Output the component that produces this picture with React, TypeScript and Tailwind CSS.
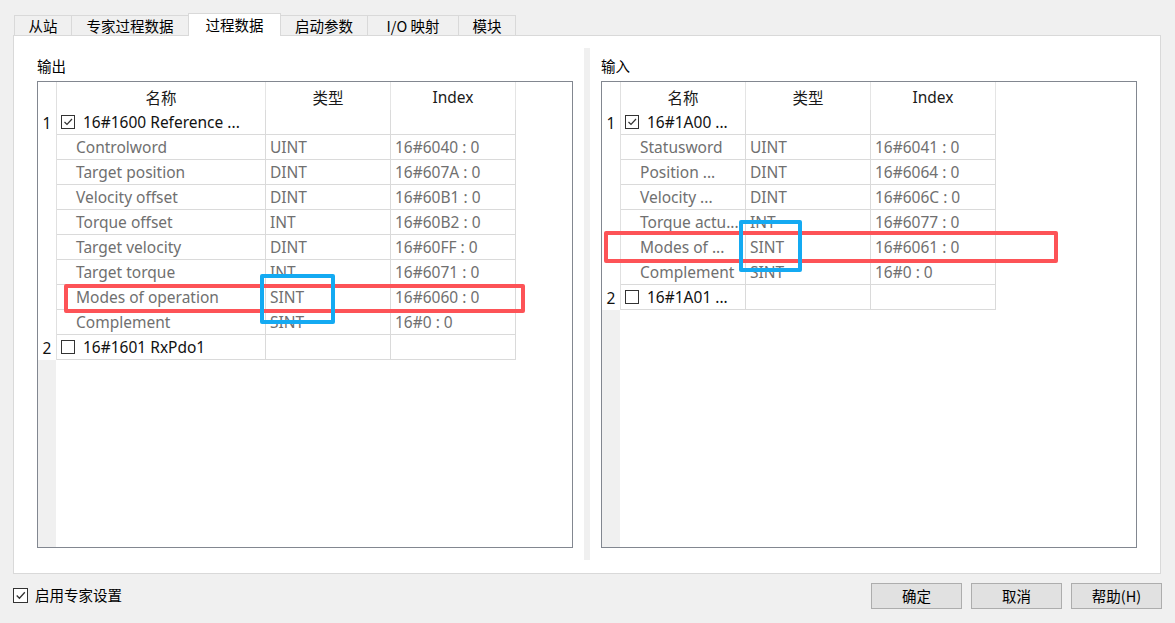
import React from 'react';

const latin = { fontFamily: '"Noto Sans", "Noto Sans CJK SC", sans-serif' };
const cjk = { fontFamily: '"Noto Sans CJK SC", "Noto Sans", sans-serif' };

type Row = { name: string; type: string; idx: string };
type Group = { no: string; label: string; checked: boolean; rows: Row[] };

const outputs: Group[] = [
    {
        no: '1',
        label: '16#1600 Reference ...',
        checked: true,
        rows: [
            { name: 'Controlword', type: 'UINT', idx: '16#6040 : 0' },
            { name: 'Target position', type: 'DINT', idx: '16#607A : 0' },
            { name: 'Velocity offset', type: 'DINT', idx: '16#60B1 : 0' },
            { name: 'Torque offset', type: 'INT', idx: '16#60B2 : 0' },
            { name: 'Target velocity', type: 'DINT', idx: '16#60FF : 0' },
            { name: 'Target torque', type: 'INT', idx: '16#6071 : 0' },
            { name: 'Modes of operation', type: 'SINT', idx: '16#6060 : 0' },
            { name: 'Complement', type: 'SINT', idx: '16#0 : 0' },
        ],
    },
    { no: '2', label: '16#1601 RxPdo1', checked: false, rows: [] },
];

const inputs: Group[] = [
    {
        no: '1',
        label: '16#1A00 ...',
        checked: true,
        rows: [
            { name: 'Statusword', type: 'UINT', idx: '16#6041 : 0' },
            { name: 'Position ...', type: 'DINT', idx: '16#6064 : 0' },
            { name: 'Velocity ...', type: 'DINT', idx: '16#606C : 0' },
            { name: 'Torque actu...', type: 'INT', idx: '16#6077 : 0' },
            { name: 'Modes of ...', type: 'SINT', idx: '16#6061 : 0' },
            { name: 'Complement', type: 'SINT', idx: '16#0 : 0' },
        ],
    },
    { no: '2', label: '16#1A01 ...', checked: false, rows: [] },
];

function CheckBox({ checked, size = 14 }: { checked: boolean; size?: number }) {
    return (
        <div
            className="flex items-center justify-center border border-[#333333] bg-white shrink-0"
            style={{ width: size, height: size }}
        >
            {checked && (
                <svg width={size - 2} height={size - 2} viewBox="0 0 12 12">
                    <polyline points="2.5,6 5,8.5 10,3" fill="none" stroke="#333333" strokeWidth="1.2" />
                </svg>
            )}
        </div>
    );
}

function ProcessTable({ nameW, groups }: { nameW: number; groups: Group[] }) {
    const nameCls = nameW === 209 ? 'w-[209px]' : 'w-[125px]';
    return (
        <div className="relative h-[467px] border border-[#828790] bg-white flex flex-col text-[15.5px]" style={latin}>
            {/* header */}
            <div className="flex h-[28px] shrink-0 text-[#1a1a1a]">
                <div className="w-[19px] border-r border-[#e0e0e0]" />
                <div className={`${nameCls} border-r border-[#e5e5e5] flex items-center justify-center pt-[3px]`} style={cjk}>
                    名称
                </div>
                <div className="w-[125px] border-r border-[#e5e5e5] flex items-center justify-center pt-[3px]" style={cjk}>
                    类型
                </div>
                <div className="w-[125px] border-r border-[#e5e5e5] flex items-center justify-center pt-[3px]">Index</div>
            </div>

            {groups.map((g) => (
                <React.Fragment key={g.no}>
                    <div className="flex h-[25px] shrink-0 text-[#111111]">
                        <div className="w-[19px] border-r border-[#e0e0e0] flex items-center justify-center pt-[3px]">{g.no}</div>
                        <div className={`${nameCls} border-r border-b border-[#dadada] flex items-center pl-[4px] gap-[8px] whitespace-nowrap`}>
                            <CheckBox checked={g.checked} />
                            <span className="pt-[2px]">{g.label}</span>
                        </div>
                        <div className="w-[125px] border-r border-b border-[#dadada]" />
                        <div className="w-[125px] border-r border-b border-[#dadada]" />
                    </div>
                    {g.rows.map((r) => (
                        <div key={r.name} className="flex h-[25px] shrink-0 text-[#707070] whitespace-nowrap">
                            <div className="w-[19px] border-r border-[#e0e0e0]" />
                            <div className={`${nameCls} border-r border-b border-[#dadada] flex items-center pl-[19px] pt-[2px] overflow-hidden`}>
                                {r.name}
                            </div>
                            <div className="w-[125px] border-r border-b border-[#dadada] flex items-center pl-[4px] pt-[2px]">{r.type}</div>
                            <div className="w-[125px] border-r border-b border-[#dadada] flex items-center pl-[4px] pt-[2px]">{r.idx}</div>
                        </div>
                    ))}
                </React.Fragment>
            ))}

            <div className="flex flex-1">
                <div className="w-[18px] bg-[#f0f0f0]" />
            </div>
        </div>
    );
}

export default function App() {
    const tabs = [
        { label: '从站', w: 'w-[57px] border-l' },
        { label: '专家过程数据', w: 'w-[117px] border-l' },
        { label: '过程数据', w: 'w-[93px] border-l border-r', active: true },
        { label: '启动参数', w: 'w-[86px]' },
        { label: 'I/O 映射', w: 'w-[91px] border-l' },
        { label: '模块', w: 'w-[58px] border-l border-r' },
    ];

    return (
        <div className="w-[1175px] h-[623px] bg-[#f0f0f0] overflow-hidden pt-[13px] px-[13px] text-black" style={cjk}>
            {/* tabs */}
            <div className="flex items-end h-[22px] ml-px text-[14.5px]">
                {tabs.map((t) =>
                    t.active ? (
                        <div
                            key={t.label}
                            className={`${t.w} h-[23px] -mb-px relative z-10 bg-white border-t border-[#d9d9d9] flex items-center justify-center pb-px`}
                        >
                            {t.label}
                        </div>
                    ) : (
                        <div
                            key={t.label}
                            className={`${t.w} h-[20px] bg-[#f0f0f0] border-t border-[#d9d9d9] flex items-center justify-center`}
                        >
                            {t.label}
                        </div>
                    ),
                )}
            </div>

            {/* panel */}
            <div className="w-[1148px] h-[539px] bg-white border border-[#d9d9d9] flex pt-[12px] pl-[23px]">
                <div className="w-[536px] flex flex-col">
                    <div className="h-[33px] pt-[8px] text-[14.5px] leading-[20px]">输出</div>
                    <div className="relative">
                        <ProcessTable nameW={209} groups={outputs} />
                        <div className="absolute left-[27px] top-[203px] w-[461px] h-[29px] border-[4px] border-[#fd5357] rounded-[2px]" />
                        <div className="absolute left-[223px] top-[193px] w-[75px] h-[50px] border-[4px] border-[#14aaf2] rounded-[2px]" />
                    </div>
                </div>

                <div className="ml-[11px] w-[6px] h-[512px] bg-[#f0f0f0]" />

                <div className="ml-[11px] w-[536px] flex flex-col">
                    <div className="h-[33px] pt-[8px] text-[14.5px] leading-[20px]">输入</div>
                    <div className="relative">
                        <ProcessTable nameW={125} groups={inputs} />
                        <div className="absolute left-[3px] top-[150px] w-[454px] h-[32px] border-[4px] border-[#fd5357] rounded-[2px]" />
                        <div className="absolute left-[138px] top-[139px] w-[63px] h-[52px] border-[4px] border-[#14aaf2] rounded-[2px]" />
                    </div>
                </div>
            </div>

            {/* footer */}
            <div className="flex items-start mt-[9px] text-[14.5px]">
                <div className="mt-[4px] flex items-center gap-[7px]">
                    <CheckBox checked size={15} />
                    <span className="leading-[16px]">启用专家设置</span>
                </div>
                <div className="ml-auto flex gap-[9px]">
                    {['确定', '取消', '帮助(H)'].map((b) => (
                        <button
                            key={b}
                            className="w-[91px] h-[26px] bg-[#e1e1e1] border border-[#adadad] flex items-center justify-center"
                        >
                            {b}
                        </button>
                    ))}
                </div>
            </div>
        </div>
    );
}
